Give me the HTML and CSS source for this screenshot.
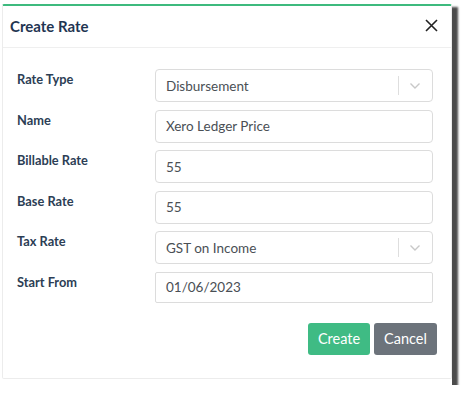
FILE: index.html
```html
<!DOCTYPE html>
<html lang="en">
<head>
<meta charset="utf-8">
<title>Create Rate</title>
<link rel="stylesheet" href="styles.css">
</head>
<body>
<div class="shot">
  <div class="modal">
    <div class="modal-header">
      <h5 class="modal-title">Create Rate</h5>
      <button class="close" type="button" aria-label="Close">
        <svg width="13" height="13" viewBox="0 0 13 13"><path d="M1 1L12 12M12 1L1 12" stroke="#222" stroke-width="1.6" fill="none"/></svg>
      </button>
    </div>
    <div class="modal-body">
      <div class="form-row">
        <label class="form-label">Rate Type</label>
        <div class="field select">
          <span class="value">Disbursement</span>
          <span class="indicators"><span class="sep"></span><svg class="chev" width="12" height="8" viewBox="0 0 12 8"><path d="M1.5 1.5L6 6L10.5 1.5" stroke="#c8c8c8" stroke-width="1.4" fill="none"/></svg></span>
        </div>
      </div>
      <div class="form-row">
        <label class="form-label">Name</label>
        <div class="field"><span class="value">Xero Ledger Price</span></div>
      </div>
      <div class="form-row">
        <label class="form-label">Billable Rate</label>
        <div class="field"><span class="value">55</span></div>
      </div>
      <div class="form-row">
        <label class="form-label">Base Rate</label>
        <div class="field"><span class="value">55</span></div>
      </div>
      <div class="form-row">
        <label class="form-label">Tax Rate</label>
        <div class="field select">
          <span class="value">GST on Income</span>
          <span class="indicators"><span class="sep"></span><svg class="chev" width="12" height="8" viewBox="0 0 12 8"><path d="M1.5 1.5L6 6L10.5 1.5" stroke="#c8c8c8" stroke-width="1.4" fill="none"/></svg></span>
        </div>
      </div>
      <div class="form-row">
        <label class="form-label">Start From</label>
        <div class="field date"><span class="value">01/06/2023</span></div>
      </div>
    </div>
    <div class="modal-footer">
      <button class="btn btn-create" type="button">Create</button>
      <button class="btn btn-cancel" type="button">Cancel</button>
    </div>
  </div>
</div>
</body>
</html>
```
FILE: styles.css
```css
* { box-sizing: border-box; }
html, body { margin: 0; padding: 0; background: #fff; }
body { font-family: "Lato", "Noto Sans", sans-serif; }

.shot {
  width: 452px;
  height: 385px;
  background: #fff;
  padding: 4px 0 0 2px;
  box-shadow: 6px 7px 2px rgba(0, 0, 0, 0.7);
}

.modal {
  width: 450px;
  height: 375px;
  border: 1px solid #ececec;
  border-top: 2px solid #3dba7e;
  border-radius: 2px;
  background: #fff;
  display: flex;
  flex-direction: column;
}

.modal-header {
  height: 42px;
  border-bottom: 1px solid #efefef;
  display: flex;
  align-items: center;
  justify-content: space-between;
  padding: 0 13px 2px 7px;
}
.modal-title {
  margin: 0;
  font-size: 15px;
  font-weight: 700;
  color: #1f3552;
  line-height: 20px;
}
.close {
  border: 0;
  background: none;
  padding: 0;
  width: 13px;
  height: 13px;
  display: flex;
}

.modal-body {
  padding: 21px 18px 0 14px;
  display: flex;
  flex-direction: column;
  gap: 7.6px;
}

.form-row {
  display: grid;
  grid-template-columns: 138px 1fr;
  align-items: start;
}
.form-label {
  font-size: 12.8px;
  font-weight: 700;
  color: #2c3e55;
  line-height: 20px;
}

.field {
  height: 33px;
  border: 1px solid #dcdcdc;
  border-radius: 4px;
  display: flex;
  align-items: center;
  padding-left: 10px;
  font-size: 13.5px;
  color: #4a4f55;
}
.field.date { height: 31px; border-radius: 2px; }
.select { justify-content: space-between; padding-right: 0; }
.indicators {
  display: flex;
  align-items: center;
  height: 100%;
}
.sep {
  width: 1px;
  height: 19px;
  background: #dedede;
}
.chev { margin: 1px 11px 0 10px; }

.modal-footer {
  display: flex;
  justify-content: flex-end;
  gap: 4px;
  padding: 20px 14px 0 0;
}
.btn {
  height: 32px;
  border: 0;
  border-radius: 3px;
  color: #fff;
  font-family: "Lato", "Noto Sans", sans-serif;
  font-size: 14.5px;
  padding: 0;
}
.btn-create { width: 62px; background: #3fbb84; }
.btn-cancel { width: 63px; background: #6c737b; }
```
